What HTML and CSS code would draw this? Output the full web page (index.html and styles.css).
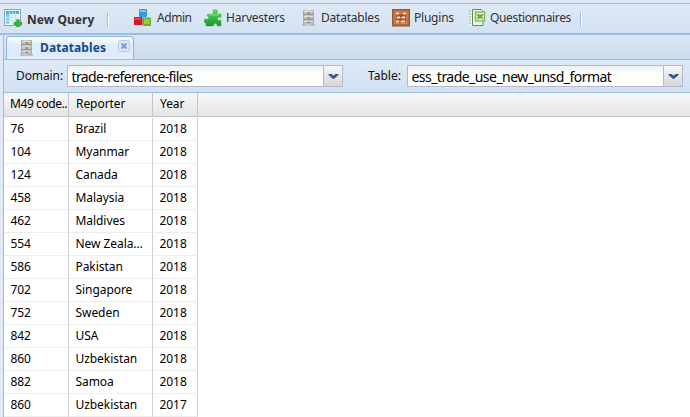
FILE: index.html
```html
<!DOCTYPE html>
<html lang="en">
<head>
<meta charset="utf-8">
<title>Datatables</title>
<link rel="stylesheet" href="styles.css">
</head>
<body>
<svg class="defs" aria-hidden="true">
  <defs>
    <linearGradient id="steel"><stop offset="0" stop-color="#a9a9a8"/><stop offset=".35" stop-color="#d2d2d0"/><stop offset="1" stop-color="#adadad"/></linearGradient>
    <linearGradient id="leaf" x2="0" y2="1"><stop offset="0" stop-color="#5fd35f"/><stop offset="1" stop-color="#139c2b"/></linearGradient>
  </defs>
  <symbol id="cabinet" viewBox="0 0 13 17">
    <path d="M0 14h13v2H0z" fill="#bcc3ca"/>
    <rect x="1" y="0" width="11" height="15" fill="url(#steel)"/>
    <path d="M2 1.500h9M2 6.500h9M2 11.500h9" stroke="#dededb"/>
    <path d="M1 4.500h11M1 9.500h11" stroke="#989896"/>
    <path d="M5 3h3M5 8h3M5 12.500h3" stroke="#858987" stroke-width="1.500"/>
  </symbol>
</svg>
<nav class="toolbar">
  <a class="item query"><svg width="18" height="18" viewBox="0 0 18 18"><rect x=".5" y=".5" width="16" height="16" fill="#edf8ff" stroke="#8ba8a8"/><path d="M2 2h13v3H2z" fill="#45b4e3"/><path d="M2 5h3v10H2z" fill="#7fd0f0"/><path d="M2 8.500h13M2 11.500h13M5.500 3v12M8.500 3v12M11.500 3v12" stroke="#c0e1f3"/><path d="M12.500 10.500h3v2.500H18v3h-2.500v2h-3v-2H10v-3h2.500z" fill="#35b344" stroke="#239a37" stroke-width=".4"/></svg><span>New Query</span></a>
  <i class="sep"></i>
  <a class="item admin"><svg width="18" height="18" viewBox="0 0 18 18"><rect x="5" y="0" width="8" height="8" rx="1" fill="#2f9fd7"/><path d="M6 1h6v2H6z" fill="#79cef2"/><rect x="0" y="8" width="8.500" height="8" rx="1" fill="#d5142d"/><path d="M1 9h6v2H1z" fill="#ee4454"/><rect x="8.500" y="8.500" width="8.500" height="8.500" rx="1" fill="#72aa27"/><path d="M10 10h5.500v5H10z" fill="#98cb45"/></svg><span>Admin</span></a>
  <a class="item harvest"><svg width="18" height="18" viewBox="0 0 18 18"><path d="M9.500 5c.4-.6-.7-1.200-.7-2.500C8.800-.2 13.500-.2 13.500 2.500c0 1-.8 1.400-.6 2.500H17v3.500c-1.500-.5-3.500-.5-3.500 1.300s2 1.700 3.500 1.200V17h-4c.8-2.800-3.500-3.300-3.500-.7V17H2v-3c-2.500.3-2.700-3.800-.3-4 1.300 0 1.800.7 2.800 0 .7-.7 0-1.800-.8-2.500L3 5.500z" fill="url(#leaf)" stroke="#2baa3b" stroke-width=".4"/><path d="M10.300 2.500l1.200-.8M5 6h10" stroke="#86dd83"/></svg><span>Harvesters</span></a>
  <a class="item tables"><svg width="13" height="17"><use href="#cabinet"/></svg><span>Datatables</span></a>
  <a class="item plugins"><svg width="18" height="18" viewBox="0 0 18 18"><rect x=".5" y=".5" width="17" height="16.500" fill="#b9693a" stroke="#a05228"/><rect x="3" y="3" width="12" height="11.500" fill="#a5522b" stroke="#cd8a60"/><path d="M3 4.500h12M3 8.500h12M3 12.500h12" stroke="#c98e6d"/><path d="M4 4.500h3m4 0h3M5 8.500h3m2 0h3M4 12.500h3m2 0h4" stroke="#f0dfd4" stroke-width="2.200"/></svg><span>Plugins</span></a>
  <a class="item quest"><svg width="18" height="18" viewBox="0 0 18 18"><path d="M1 1h12l2 2v14H1z" fill="#f0f2ee"/><path d="M4.500 .5H13l2 2v14H4.500z" fill="#edf3eb" stroke="#57905f"/><path d="M1 2h2M1 5h2M1 8h2M1 11h2M1 14h2" stroke="#9fa6a1"/><rect x="7.500" y="3" width="9" height="9" fill="#d7ebc3" stroke="#7cb956" stroke-width="1.300"/><path d="M9.500 5.500l5 4m0-4l-5 4" stroke="#5fa637" stroke-width="1.700"/></svg><span>Questionnaires</span></a>
  <i class="sep"></i>
</nav>
<main class="panel">
  <div class="tabs">
    <div class="tab"><svg width="13" height="17"><use href="#cabinet"/></svg><span>Datatables</span>
      <svg class="close" width="13" height="13" viewBox="0 0 13 13"><rect x=".5" y=".5" width="11" height="11" rx="2" fill="#dce8f7" stroke="#b6cbe6"/><path d="M3.500 3.500l5 5m0-5l-5 5" stroke="#7d9cc6" stroke-width="1.900"/></svg>
    </div>
  </div>
  <div class="filters">
    <label class="domain-label">Domain:</label>
    <div class="combo"><span class="value domain">trade-reference-files</span><b class="trigger"><svg width="11" height="7" viewBox="0 0 11 7"><path d="M.5 1h3l2 1.700L7.500 1h3v1L5.500 6.300.5 2z" fill="#2f5596"/></svg></b></div>
    <label class="table-label">Table:</label>
    <div class="combo"><span class="value table">ess_trade_use_new_unsd_format</span><b class="trigger"><svg width="11" height="7" viewBox="0 0 11 7"><path d="M.5 1h3l2 1.700L7.500 1h3v1L5.500 6.300.5 2z" fill="#2f5596"/></svg></b></div>
  </div>
  <div class="row head"><span class="code">M49 code..</span><span>Reporter</span><span>Year</span></div>
  <div class="grid">
    <div class="row"><span>76</span><span>Brazil</span><span>2018</span></div>
    <div class="row"><span>104</span><span>Myanmar</span><span>2018</span></div>
    <div class="row"><span>124</span><span>Canada</span><span>2018</span></div>
    <div class="row"><span>458</span><span>Malaysia</span><span>2018</span></div>
    <div class="row"><span>462</span><span>Maldives</span><span>2018</span></div>
    <div class="row"><span>554</span><span>New Zeala…</span><span>2018</span></div>
    <div class="row"><span>586</span><span>Pakistan</span><span>2018</span></div>
    <div class="row"><span>702</span><span>Singapore</span><span>2018</span></div>
    <div class="row"><span>752</span><span>Sweden</span><span>2018</span></div>
    <div class="row"><span>842</span><span>USA</span><span>2018</span></div>
    <div class="row"><span>860</span><span>Uzbekistan</span><span>2018</span></div>
    <div class="row"><span>882</span><span>Samoa</span><span>2018</span></div>
    <div class="row"><span>860</span><span>Uzbekistan</span><span>2017</span></div>
  </div>
</main>
</body>
</html>
```
FILE: styles.css
```css
* { box-sizing: border-box; }
body { margin: 0; height: 417px; overflow: hidden; background: #dfe8f6; color: #111; font: 12px/16px "Noto Sans", "Open Sans", sans-serif; white-space: nowrap; }
svg { display: block; flex: none; }
.defs { position: absolute; width: 0; height: 0; }
.toolbar { margin-top: 3px; height: 32px; display: grid; grid-template-columns: 107px 27px 70px 98px 90px 76px 112px 10px; padding-bottom: 1px; align-items: center; border-top: 1px solid #99bce8; border-bottom: 2px solid #99bce8; background: linear-gradient(#dfe9f5, #d3e1f1); color: #333; }
.item { display: flex; align-items: center; gap: 5px; letter-spacing: -.22px; }
.query { padding-left: 4px; font-weight: bold; letter-spacing: .08px; }
.query span { padding-top: 3px; }
.admin { letter-spacing: -.45px; }
.harvest { gap: 4px; }
.tables { gap: 6px; }
.plugins, .quest { gap: 4px; }
.quest { letter-spacing: -.35px; }
.sep { width: 2px; height: 15px; margin-top: 2px; border-left: 1px solid #98c0f4; border-right: 1px solid #fff; }
.panel { margin-left: 3px; border-left: 1px solid #99bce8; height: 382px; background: #fff; }
.tabs { height: 25px; padding: 1px 0 0 2px; background: linear-gradient(#dce7f5, #cbdcef); border-bottom: 1px solid #99bce8; }
.tab { display: flex; width: 128px; height: 23px; align-items: center; padding-left: 13px; border: 1px solid #8db2e3; border-bottom: 0; border-radius: 4px 4px 0 0; background: linear-gradient(#fff, #deecfd 35%, #deecfd); color: #15498b; font-weight: bold; letter-spacing: .1px; }
.tab span { margin-left: 7px; width: 67px; }
.tab .close { margin: -3px 0 0 11px; }
.filters { display: flex; height: 33px; align-items: center; background: linear-gradient(#dfe9f5, #d3e1f1); border-bottom: 1px solid #99bce8; }
.domain-label { width: 63px; padding-left: 12px; letter-spacing: -.1px; }
.table-label { width: 64px; padding-left: 25px; }
.combo { display: flex; width: 276px; height: 22px; border: 1px solid #b5b8c8; background: linear-gradient(#edf2ef, #fff 40%); }
.value { flex: 1; padding-left: 3.500px; font-size: 14px; line-height: 21px; letter-spacing: -.6px; color: #000; }
.table { letter-spacing: -.54px; }
.trigger { display: grid; place-items: center; width: 19px; border-left: 1px solid #b5b8c8; background: linear-gradient(#f7f7f7, #d6d6d6); }
.row { display: grid; grid-template-columns: 65px 84px 45px; width: 194px; height: 23px; line-height: 22px; letter-spacing: -.06px; color: #000; }
.row span { padding-left: 6.500px; border-right: 1px solid #d0d0d0; border-bottom: 1px solid #ededed; overflow: hidden; }
.head { width: 100%; height: 24px; border-bottom: 1px solid #c5c5c5; background: linear-gradient(#f9f9f9, #e3e4e6); }
.head span { padding-left: 7px; border-right-color: #c5c5c5; border-bottom: 0; }
.head .code { padding-left: 6px; letter-spacing: -.42px; }
.grid { padding-top: 1px; }
```
